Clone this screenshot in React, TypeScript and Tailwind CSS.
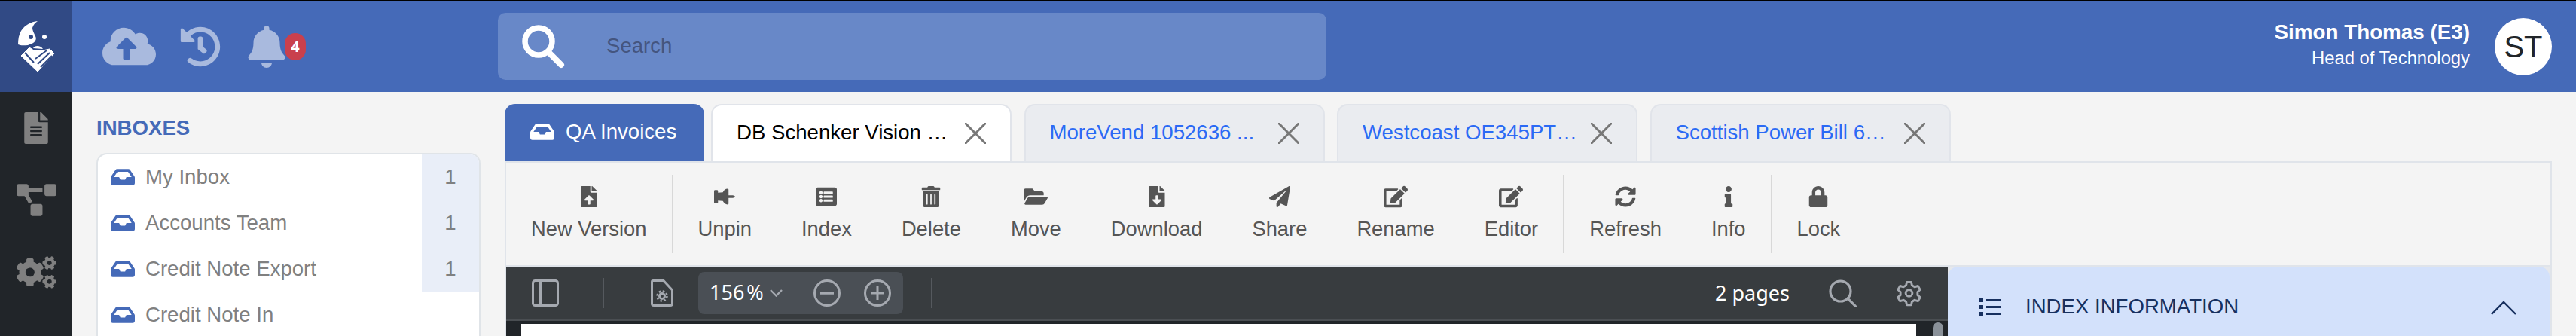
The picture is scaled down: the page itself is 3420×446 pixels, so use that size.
import React from "react";
import {
  FaCloudUploadAlt, FaHistory, FaBell, FaFileAlt, FaProjectDiagram, FaCogs, FaInbox,
  FaFileUpload, FaThumbtack, FaListAlt, FaTrashAlt, FaFolderOpen, FaFileDownload, FaPaperPlane,
  FaEdit, FaSyncAlt, FaInfo, FaLock,
} from "react-icons/fa";

function Logo() {
  return (
    <svg width="96" height="121" viewBox="0 1 96 121">
      <path d="M50 28C41 29 33 33 28 41C25 46 24 52 24 59C28 61 33 60 37 60L42 58C47 56 49 52 47 48C45 44 43 40 43 37C44 33 47 30 50 28Z" fill="#fff" />
      <circle cx="41" cy="49" r="3" fill="#314a85" />
      <circle cx="59" cy="49" r="3" fill="#fff" />
      <path d="M44 64C46 60 54 60 57 65Z" fill="#fff" />
      <path d="M39 63L45 67L57 67L66 65L72 71L50 95L28 74Z" fill="#fff" strokeLinejoin="round" stroke="#fff" strokeWidth="1" />
      <path d="M34 73L40 67L47 73L41 80Z" fill="#fff" />
      <path d="M33 70L45 83M47 78L62 67M50 85L66 70M54 89L69 74" stroke="#314a85" strokeWidth="2" fill="none" />
    </svg>
  );
}

function Close() {
  return (
    <svg width="28" height="28" viewBox="0 0 28 28" className="shrink-0">
      <path d="M1 1L27 27M27 1L1 27" stroke="#777" strokeWidth="3" strokeLinecap="round" />
    </svg>
  );
}

function Tab({ label }: { label: string }) {
  return (
    <div className="flex h-[76px] w-[399px] items-start rounded-t-[14px] border-2 border-b-0 border-[#e1e4ea] bg-[#eaecf0] pl-[32px] pr-[32px] pt-[23px]">
      <span className="mt-[-2px] flex-1 truncate text-[27.6px] leading-[30px] text-[#2b6af5]">{label}</span>
      <Close />
    </div>
  );
}

function InboxRow({ label, count }: { label: string; count?: string }) {
  return (
    <div className="flex h-[61px] items-start">
      <div className="flex h-[60px] flex-1 items-center pl-[17px]">
        <FaInbox size={32} color="#456ab8" />
        <span className="ml-[14px] text-[27.6px] leading-[30px] text-[#808080]">{label}</span>
      </div>
      {count ? (
        <div className="flex h-[60px] w-[76px] items-center justify-center bg-[#e9eef8] text-[27.6px] text-[#808080]">{count}</div>
      ) : null}
    </div>
  );
}

function Tool({ icon, label }: { icon: React.ReactNode; label: string }) {
  return (
    <div className="flex flex-col items-center px-[33px] pt-[15px] text-[#555]">
      <div className="flex h-[28px] items-center justify-center">{icon}</div>
      <div className="mt-[12px] whitespace-nowrap text-[27.35px] leading-[34px]">{label}</div>
    </div>
  );
}

function Divider() {
  return <div className="h-[104px] w-[2px] bg-[#d8d8d8]" />;
}

const vStroke = "#a5a9b0";

function App() {
  return (
    <div className="flex h-[446px] w-[3420px] flex-col overflow-hidden border-t border-black bg-[#f4f4f4] font-['Liberation_Sans',Arial,sans-serif]">
      <header className="flex h-[121px] shrink-0 items-center bg-[#456ab8]">
        <div className="h-[121px] w-[96px] bg-[#314a85]">
          <Logo />
        </div>
        <div className="ml-[40px] flex items-center">
          <FaCloudUploadAlt size={71} color="#a9bade" />
          <div className="ml-[32px]"><FaHistory size={54} color="#a9bade" /></div>
          <div className="ml-[33px]"><FaBell size={56} color="#a9bade" /></div>
          <div className="ml-[-4px] flex h-[36px] w-[28px] items-center justify-center rounded-[14px] bg-[#c9404d] font-['Noto_Sans',sans-serif] text-[20px] font-bold text-white">4</div>
        </div>
        <div className="ml-[255px] flex h-[89px] w-[1100px] items-center rounded-[10px] bg-[#6888c8] pl-[32px]">
          <svg width="58" height="58" viewBox="0 0 58 58">
            <circle cx="22" cy="22" r="18" fill="none" stroke="#fff" strokeWidth="7.5" />
            <path d="M35 36L52 53" stroke="#fff" strokeWidth="8" strokeLinecap="round" />
          </svg>
          <span className="ml-[54px] mt-[-2px] text-[27.6px] text-[#44557f]">Search</span>
        </div>
        <div className="ml-auto flex items-center pr-[32px]">
          <div className="mt-[-6px] flex flex-col items-end text-white">
            <span className="text-[27.8px] font-bold leading-[36px]">Simon Thomas (E3)</span>
            <span className="text-[23.8px] leading-[32px]">Head of Technology</span>
          </div>
          <div className="ml-[33px] flex h-[76px] w-[76px] items-center justify-center rounded-full bg-white text-[40px] text-[#212529]">ST</div>
        </div>
      </header>

      <div className="flex min-h-0 flex-1">
        <nav className="flex w-[96px] shrink-0 flex-col items-center bg-[#212529] pt-[27px]">
          <FaFileAlt size={42} color="#808080" />
          <div className="mt-[48px]"><FaProjectDiagram size={53} color="#808080" /></div>
          <div className="mt-[43px]"><FaCogs size={53} color="#808080" /></div>
        </nav>

        <aside className="w-[574px] shrink-0 pl-[32px] pt-[32px]">
          <h2 className="text-[27.6px] font-bold leading-[32px] text-[#456ab8]">INBOXES</h2>
          <div className="mt-[17px] w-[510px] overflow-hidden rounded-t-[14px] border-2 border-b-0 border-[#e0e4e8] bg-white">
            <InboxRow label="My Inbox" count="1" />
            <InboxRow label="Accounts Team" count="1" />
            <InboxRow label="Credit Note Export" count="1" />
            <InboxRow label="Credit Note In" />
          </div>
        </aside>

        <main className="flex w-[2718px] shrink-0 flex-col pt-[16px]">
          <div className="flex h-[76px] items-end">
            <div className="flex h-[76px] w-[265px] items-start rounded-t-[14px] bg-[#456ab8] pl-[34px] pt-[23px] text-white">
              <div className="mt-[-2px]"><FaInbox size={32} color="#fff" /></div>
              <span className="ml-[15px] mt-[-1px] text-[27.6px] leading-[30px]">QA Invoices</span>
            </div>
            <div className="ml-[9px] flex gap-[16.5px]">
              <div className="flex h-[76px] w-[399px] items-start rounded-t-[14px] border-2 border-b-0 border-[#e1e4ea] bg-white pl-[32px] pr-[32px] pt-[23px]">
                <span className="mt-[-2px] flex-1 truncate text-[27.6px] leading-[30px] text-black">DB Schenker Vision …</span>
                <Close />
              </div>
              <Tab label="MoreVend 1052636 ..." />
              <Tab label="Westcoast OE345PT…" />
              <Tab label="Scottish Power Bill 6…" />
            </div>
          </div>

          <div className="flex min-h-0 flex-1 flex-col border-x-[3px] border-l-2 border-t-2 border-[#e0e4ea]">
            <div className="flex h-[138px] shrink-0 items-start border-b-2 border-[#e0e4ea] pt-[16px]">
              <Tool icon={<FaFileUpload size={28} />} label="New Version" />
              <Divider />
              <Tool icon={<FaThumbtack size={28} className="-rotate-90" />} label="Unpin" />
              <Tool icon={<FaListAlt size={28} />} label="Index" />
              <Tool icon={<FaTrashAlt size={28} />} label="Delete" />
              <Tool icon={<FaFolderOpen size={32} />} label="Move" />
              <Tool icon={<FaFileDownload size={28} />} label="Download" />
              <Tool icon={<FaPaperPlane size={28} />} label="Share" />
              <Tool icon={<FaEdit size={32} />} label="Rename" />
              <Tool icon={<FaEdit size={32} />} label="Editor" />
              <Divider />
              <Tool icon={<FaSyncAlt size={28} />} label="Refresh" />
              <Tool icon={<FaInfo size={28} />} label="Info" />
              <Divider />
              <Tool icon={<FaLock size={28} />} label="Lock" />
            </div>

            <div className="flex min-h-0 flex-1">
              <section className="flex w-[1914px] shrink-0 flex-col bg-[#212529]">
                <div className="flex h-[70px] shrink-0 items-center bg-[#383c3f] pl-[34px] font-['Noto_Sans',sans-serif] text-white">
                  <svg width="36" height="36" viewBox="0 0 36 36" fill="none" stroke={vStroke} strokeWidth="3">
                    <rect x="1.5" y="1.5" width="33" height="33" rx="3" />
                    <path d="M11.500 2V34" />
                  </svg>
                  <div className="ml-[59px] h-[40px] w-px bg-[#55595e]" />
                  <svg className="ml-[62px]" width="30" height="36" viewBox="0 0 30 36" fill="none" stroke={vStroke} strokeWidth="3" strokeLinejoin="round">
                    <path d="M3 1.500H17L28.500 14V32C28.500 33.500 27.500 34.500 26 34.500H4C2.500 34.500 1.500 33.500 1.500 32V3C1.500 2 2 1.500 3 1.500Z" />
                    <circle cx="15" cy="22" r="3.500" strokeWidth="3" />
                    <circle cx="15" cy="22" r="6.500" strokeWidth="2.500" strokeDasharray="2.5 2.6" />
                  </svg>
                  <div className="ml-[33px] flex h-[56px] w-[272px] items-center rounded-[8px] bg-[#4a4f55] pl-[15px]">
                    <span className="mt-[-2px] w-[70px] whitespace-nowrap text-[27px] leading-[30px] [word-spacing:-4px]">156 %</span>
                    <svg className="ml-[10px]" width="17" height="10" viewBox="0 0 17 10" fill="none" stroke={vStroke} strokeWidth="2.4">
                      <path d="M1 1L8.500 8.500L16 1" />
                    </svg>
                    <svg className="ml-[41px]" width="36" height="36" viewBox="0 0 36 36" fill="none" stroke={vStroke} strokeWidth="3">
                      <circle cx="18" cy="18" r="16.500" />
                      <path d="M9 18H27" strokeWidth="3.500" />
                    </svg>
                    <svg className="ml-[31px]" width="36" height="36" viewBox="0 0 36 36" fill="none" stroke={vStroke} strokeWidth="3">
                      <circle cx="18" cy="18" r="16.500" />
                      <path d="M9 18H27M18 9V27" />
                    </svg>
                  </div>
                  <div className="ml-[37px] h-[40px] w-px bg-[#55595e]" />
                  <span className="ml-auto whitespace-nowrap text-[27px] leading-[30px]">2 pages</span>
                  <svg className="ml-[52px]" width="37" height="37" viewBox="0 0 37 37" fill="none" stroke={vStroke} strokeWidth="3.2">
                    <circle cx="15.500" cy="15.500" r="13.500" />
                    <path d="M25 25L36 36" strokeLinecap="round" />
                  </svg>
                  <svg className="ml-[52px] mr-[34px]" width="35" height="36" viewBox="0 0 24 24" fill="none" stroke={vStroke} strokeWidth="2">
                    <circle cx="12" cy="12" r="3" />
                    <path d="M10 2h4l.7 3 2.400 1.400 3-.9 2 3.400-2.300 2.100v2.800l2.300 2.100-2 3.400-3-.9-2.400 1.400-.7 3h-4l-.7-3-2.400-1.400-3 .9-2-3.400 2.300-2.100v-2.800L1.900 8.900l2-3.400 3 .9L9.300 5z" strokeLinejoin="round" />
                  </svg>
                </div>
                <div className="h-[2px] shrink-0 bg-[#4a4e52]" />
                <div className="flex min-h-0 flex-1 items-start pl-[20px]">
                  <div className="mt-[4px] h-[40px] w-[1852px] bg-white" />
                  <div className="ml-[22px] mt-[2px] h-[40px] w-[14px] rounded-t-full bg-[#8a9199]" />
                </div>
              </section>
              <section className="min-w-0 flex-1 bg-[#e6e8ec]">
                <div className="flex h-full items-start rounded-t-[14px] bg-[#d3e1fb] pl-[42px] pr-[44px] pt-[38px] text-[#17305f]">
                  <svg className="mt-[4px] shrink-0" width="29" height="23" viewBox="0 0 29 23" fill="#17305f">
                    <rect x="0" y="0" width="5" height="5" />
                    <rect x="0" y="9" width="5" height="5" />
                    <rect x="0" y="18" width="5" height="5" />
                    <rect x="9" y="1" width="20" height="3" />
                    <rect x="9" y="10" width="20" height="3" />
                    <rect x="9" y="19" width="20" height="3" />
                  </svg>
                  <span className="ml-[32px] text-[27.6px] leading-[30px]">INDEX INFORMATION</span>
                  <svg className="ml-auto mt-[7px]" width="34" height="19" viewBox="0 0 34 19" fill="none" stroke="#17305f" strokeWidth="2.4">
                    <path d="M1 18L17 2L33 18" />
                  </svg>
                </div>
              </section>
            </div>
          </div>
        </main>
      </div>
    </div>
  );
}

export default App;
